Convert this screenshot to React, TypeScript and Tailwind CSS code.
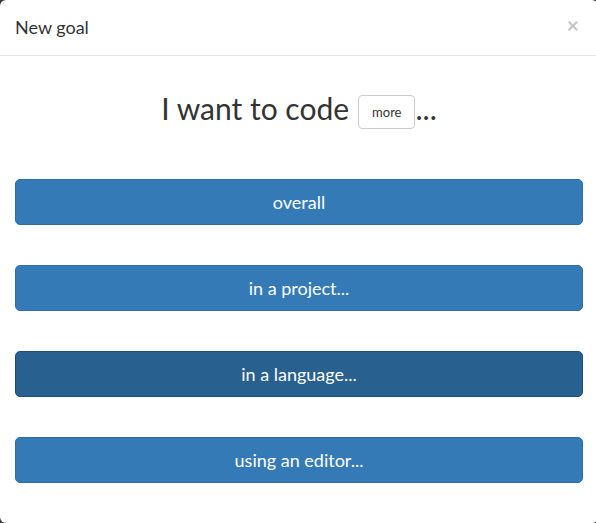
export default function App() {
  const options = ['overall', 'in a project...', 'in a language...', 'using an editor...']

  return (
    <div className="w-[596px] h-[523px] bg-[#3a3a3a] overflow-hidden" style={{ fontFamily: 'Lato, "Open Sans", sans-serif' }}>
      <div className="w-[598px] h-[523px] bg-white rounded-[6px] text-[#333]">
        {/* Header */}
        <div className="h-[56px] flex items-center justify-between pl-[15px] pr-[17px] border-b border-[#e5e5e5]">
          <h4 className="text-[18px] leading-none pb-[2px]">New goal</h4>
          <button className="text-[#c4c4c4] text-[21px] font-bold leading-none pr-[2px] pb-[6px]">×</button>
        </div>

        {/* Body */}
        <div className="px-[15px] pt-[37px]">
          <h2 className="flex items-center justify-center text-[30px] leading-none">
            <span className="pb-[8px]">I want to code</span>
            <button className="ml-[9px] h-[34px] px-[13px] border border-[#ccc] rounded-[4px] bg-white text-[13px] text-[#333]">
              more
            </button>
            <span className="pb-[8px]">...</span>
          </h2>

          <div className="mt-[48px] flex flex-col gap-[40px]">
            {options.map((label, i) => (
              <button
                key={label}
                className={
                  i === 2
                    ? 'h-[46px] w-full rounded-[5px] border border-[#204d74] bg-[#286090] text-white text-[18px]'
                    : 'h-[46px] w-full rounded-[5px] border border-[#2e6da4] bg-[#337ab7] text-white text-[18px]'
                }
              >
                {label}
              </button>
            ))}
          </div>
        </div>
      </div>
    </div>
  )
}
